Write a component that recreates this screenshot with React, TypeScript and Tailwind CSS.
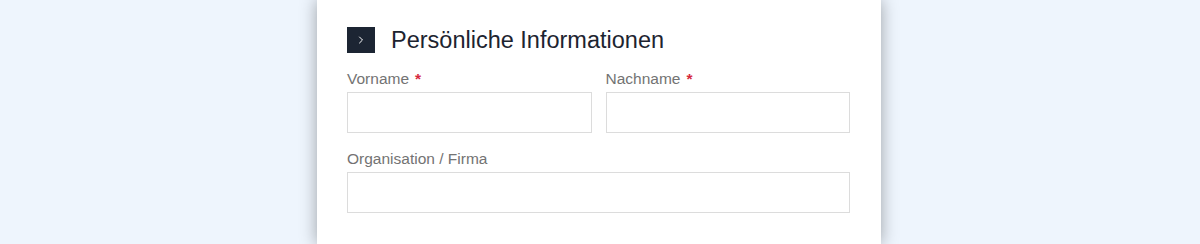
import { ChevronRight } from 'lucide-react';

function Field({ label, required }: { label: string; required?: boolean }) {
  return (
    <div className="flex flex-col gap-[3px]">
      <label className="text-[15.5px] leading-5 text-[#737373]">
        {label}
        {required && <span className="ml-1.5 font-bold text-[#d6293e]">*</span>}
      </label>
      <input
        type="text"
        className="h-[41px] w-full border border-[#dcdcdc] bg-white px-3 text-[14px] outline-none"
      />
    </div>
  );
}

export default function App() {
  return (
    <div
      className="flex h-[244px] w-full overflow-hidden bg-[#eef5fd]"
      style={{ fontFamily: '"Liberation Sans", Arial, sans-serif' }}
    >
      <div className="ml-[317px] h-full w-[564px] bg-white pl-[30px] pr-[31px] pt-[26px] shadow-[0_0_16px_rgba(0,0,0,0.35)]">
        <div className="flex items-center gap-4">
          <div className="flex h-[26px] w-[28px] items-center justify-center bg-[#1c2533]">
            <ChevronRight className="h-3 w-3 text-white" strokeWidth={2} />
          </div>
          <h2 className="text-[23.5px] leading-[28px] text-[#1d2430]">Persönliche Informationen</h2>
        </div>
        <div className="mt-[15px] grid grid-cols-2 gap-x-[14px] gap-y-4">
          <Field label="Vorname" required />
          <Field label="Nachname" required />
          <div className="col-span-2">
            <Field label="Organisation / Firma" />
          </div>
        </div>
      </div>
    </div>
  );
}
